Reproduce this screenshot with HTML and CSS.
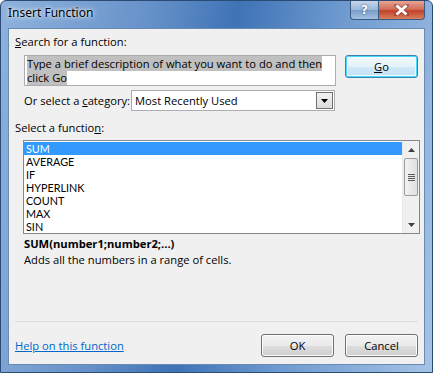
FILE: index.html
```html
<!DOCTYPE html>
<html lang="en">

<head>
    <meta charset="UTF-8">
    <meta name="viewport" content="width=device-width, initial-scale=1.0">
    <title>Insert Function</title>

    <link rel="stylesheet" href="styles.css">
</head>

<body>
    <div class="window">
        <!-- 標題列 -->
        <div class="titlebar">
            <span class="title">Insert Function</span>
            <div class="captionButtons">
                <div class="capBtn helpBtn">?</div>
                <div class="capBtn closeBtn">
                    <svg width="15" height="12" viewBox="0 0 15 12">
                        <path d="M2 1 L13 11 M13 1 L2 11" stroke="#5a2020" stroke-width="4.4" stroke-linecap="square" opacity="0.35"/>
                        <path d="M2.5 1.5 L12.5 10.5 M12.5 1.5 L2.5 10.5" stroke="#fff" stroke-width="2.8"/>
                    </svg>
                </div>
            </div>
        </div>

        <!-- 主內容 -->
        <div class="client">
            <div class="label"><u>S</u>earch for a function:</div>

            <div class="searchRow">
                <div class="textbox">
                    <span class="selText">Type a brief description of what you want to do and then</span><br>
                    <span class="selText">click Go</span>
                </div>
                <div class="btn focused"><u>G</u>o</div>
            </div>

            <div class="categoryRow">
                <span>Or select a <u>c</u>ategory:</span>
                <div class="select">
                    <span class="selectValue">Most Recently Used</span>
                    <div class="selectArrow">
                        <svg width="7" height="4" viewBox="0 0 7 4"><path d="M0 0 H7 L3.5 4 Z" fill="#000"/></svg>
                    </div>
                </div>
            </div>

            <div class="label listLabel">Select a functio<u>n</u>:</div>

            <div class="listbox">
                <div class="items">
                    <div class="item selected">SUM</div>
                    <div class="item">AVERAGE</div>
                    <div class="item">IF</div>
                    <div class="item">HYPERLINK</div>
                    <div class="item">COUNT</div>
                    <div class="item">MAX</div>
                    <div class="item">SIN</div>
                </div>
                <div class="scrollbar">
                    <div class="arrow">
                        <svg width="7" height="4" viewBox="0 0 7 4"><path d="M0 4 H7 L3.5 0 Z" fill="#404040"/></svg>
                    </div>
                    <div class="track">
                        <div class="thumb">
                            <span></span><span></span><span></span><span></span>
                        </div>
                    </div>
                    <div class="arrow">
                        <svg width="7" height="4" viewBox="0 0 7 4"><path d="M0 0 H7 L3.5 4 Z" fill="#404040"/></svg>
                    </div>
                </div>
            </div>

            <div class="syntax">SUM(number1;number2;...)</div>
            <div class="desc">Adds all the numbers in a range of cells.</div>

            <div class="spacer"></div>

            <div class="footer">
                <a class="helpLink" href="#">Help on this function</a>
                <div class="footerButtons">
                    <div class="btn">OK</div>
                    <div class="btn">Cancel</div>
                </div>
            </div>
        </div>
    </div>
</body>

</html>
```

FILE: styles.css
```css
* {
    box-sizing: border-box;
}

body {
    margin: 0;
    width: 433px;
    height: 373px;
    overflow: hidden;
    font-family: "Open Sans", "Noto Sans", sans-serif;
    font-size: 11.2px;
    color: #000;
}

/* 視窗外框 */
.window {
    width: 433px;
    height: 373px;
    display: flex;
    flex-direction: column;
    padding: 0 7px 7px 7px;
    background: linear-gradient(100deg, #8eb2dc 0%, #6792c9 30%, #3f73b6 48%, #6f9bd0 70%, #a5c3e6 100%);
    border: 1px solid #2b4b74;
    border-radius: 6px 6px 0 0;
}

.titlebar {
    height: 27px;
    display: flex;
    align-items: flex-start;
    justify-content: space-between;
    flex-shrink: 0;
}

.title {
    margin-top: 3px;
    font-family: "Noto Sans", sans-serif;
    font-size: 12px;
    color: #000;
    text-shadow: 0 0 6px rgba(255, 255, 255, 0.9), 0 0 3px rgba(255, 255, 255, 0.9);
}

.captionButtons {
    display: flex;
}

.capBtn {
    height: 19px;
    display: flex;
    align-items: center;
    justify-content: center;
    border: 1px solid #3b5a82;
    border-top: none;
}

.helpBtn {
    width: 28px;
    border-radius: 0 0 0 4px;
    border-right: none;
    background: linear-gradient(#c4d6ea, #9ab6d8 50%, #7a9cc8 51%, #a3c0e2);
    color: #fff;
    font-family: "DejaVu Sans", sans-serif;
    font-weight: bold;
    font-size: 12px;
    text-shadow: 0 0 2px #22406a;
}

.closeBtn {
    width: 47px;
    border-radius: 0 0 4px 0;
    background: linear-gradient(#e8a493, #d16f59 45%, #c1412a 55%, #d8805e);
}

/* 對話框內容 */
.client {
    flex: 1;
    display: flex;
    flex-direction: column;
    background-color: #f0f0f0;
    border: 1px solid #6a8ab4;
    padding: 5px 6px 0 6px;
}

.label {
    height: 15px;
    line-height: 15px;
}

.searchRow {
    display: flex;
    justify-content: space-between;
    margin-top: 6px;
    padding-left: 9px;
}

.textbox {
    width: 312px;
    height: 31px;
    background: #fff;
    border: 1px solid #abadb3;
    padding: 1px 2px;
    line-height: 14px;
}

.selText {
    background: #c0c0c0;
}

.btn {
    width: 73px;
    height: 23px;
    display: flex;
    align-items: center;
    justify-content: center;
    border: 1px solid #707070;
    border-radius: 3px;
    background: linear-gradient(#f2f2f2, #ebebeb 50%, #dddddd 51%, #cfcfcf);
    box-shadow: inset 0 0 0 1px #fcfcfc;
}

.btn.focused {
    border-color: #3c7fb1;
    box-shadow: inset 0 0 0 1px #48d8fb, inset 0 0 0 2px #f0fbff;
    background: linear-gradient(#f0f7fc, #e5f2fa 50%, #d1e9f7 51%, #c2e0f4);
}

.categoryRow {
    display: flex;
    align-items: center;
    gap: 1px;
    margin-top: 4px;
    padding-left: 9px;
}

.select {
    width: 204px;
    height: 21px;
    display: flex;
    align-items: center;
    justify-content: space-between;
    background: #fff;
    border: 1px solid #abadb3;
    padding-left: 3px;
}

.selectArrow {
    width: 17px;
    height: 17px;
    margin-right: 1px;
    display: flex;
    align-items: center;
    justify-content: center;
    border: 1px solid #707070;
    background: linear-gradient(#f2f2f2, #dcdcdc);
}

.listLabel {
    margin-top: 9px;
}

.listbox {
    display: flex;
    width: 397px;
    height: 94px;
    margin-top: 5px;
    margin-left: 8px;
    background: #fff;
    border: 1px solid #828790;
}

.items {
    flex: 1;
    padding-top: 1px;
}

.item {
    height: 13px;
    line-height: 13px;
    padding-left: 2px;
    font-family: "Lato", "Open Sans", sans-serif;
    font-size: 10.8px;
}

.item.selected {
    background: #3399ff;
    color: #fff;
}

.scrollbar {
    width: 17px;
    display: flex;
    flex-direction: column;
    background: #f0f0f0;
    border-left: 1px solid #e8e8e8;
}

.arrow {
    height: 17px;
    display: flex;
    align-items: center;
    justify-content: center;
}

.track {
    flex: 1;
}

.thumb {
    height: 38px;
    margin: 0 1px;
    display: flex;
    flex-direction: column;
    align-items: center;
    justify-content: center;
    gap: 1px;
    border: 1px solid #9a9a9a;
    border-radius: 2px;
    background: linear-gradient(90deg, #f2f2f2, #e0e0e0);
}

.thumb span {
    width: 7px;
    height: 1px;
    background: #5a5a5a;
}

.syntax {
    margin-top: 2px;
    margin-left: 9px;
    font-weight: bold;
    line-height: 15px;
}

.desc {
    margin-top: 1px;
    margin-left: 9px;
    line-height: 15px;
}

.spacer {
    flex: 1;
}

.footer {
    border-top: 1px solid #dcdcdc;
    display: flex;
    align-items: center;
    justify-content: space-between;
    height: 43px;
    padding-top: 5px;
}

.helpLink {
    color: #0066cc;
    text-decoration: underline;
}

.footerButtons {
    display: flex;
    gap: 11px;
}
```
